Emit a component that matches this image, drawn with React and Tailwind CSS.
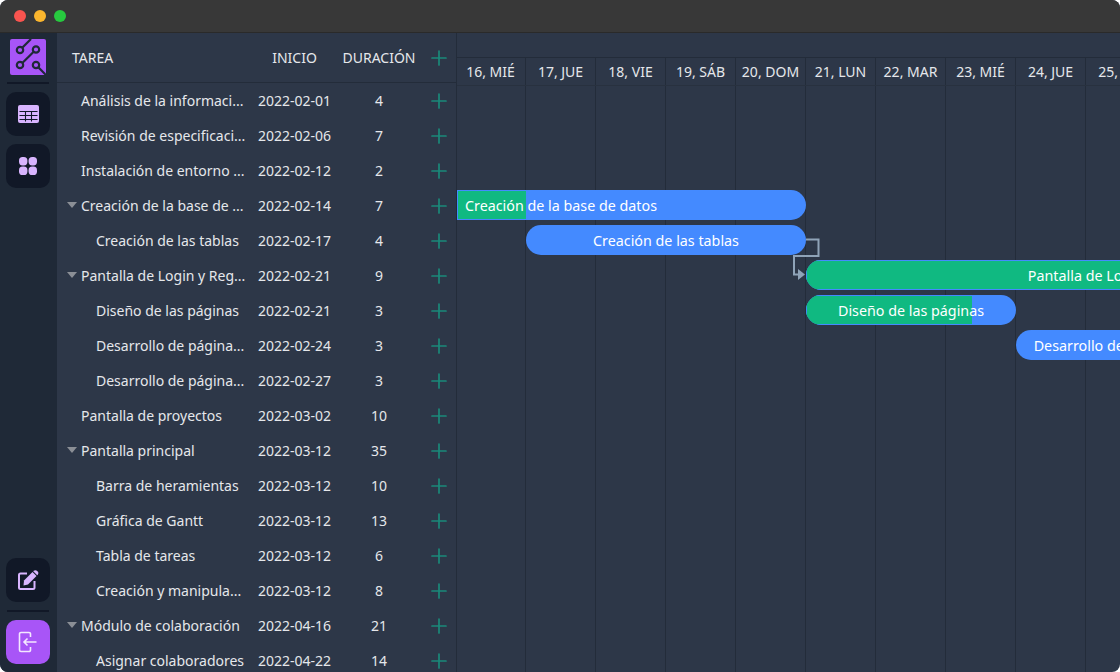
import React from 'react';
import { Plus } from 'lucide-react';

const tasks = [
  { name: 'Análisis de la informaci...', start: '2022-02-01', days: 4, level: 0 },
  { name: 'Revisión de especificaci...', start: '2022-02-06', days: 7, level: 0 },
  { name: 'Instalación de entorno ...', start: '2022-02-12', days: 2, level: 0 },
  { name: 'Creación de la base de ...', start: '2022-02-14', days: 7, level: 0, open: true },
  { name: 'Creación de las tablas', start: '2022-02-17', days: 4, level: 1 },
  { name: 'Pantalla de Login y Reg...', start: '2022-02-21', days: 9, level: 0, open: true },
  { name: 'Diseño de las páginas', start: '2022-02-21', days: 3, level: 1 },
  { name: 'Desarrollo de página...', start: '2022-02-24', days: 3, level: 1 },
  { name: 'Desarrollo de página...', start: '2022-02-27', days: 3, level: 1 },
  { name: 'Pantalla de proyectos', start: '2022-03-02', days: 10, level: 0 },
  { name: 'Pantalla principal', start: '2022-03-12', days: 35, level: 0, open: true },
  { name: 'Barra de heramientas', start: '2022-03-12', days: 10, level: 1 },
  { name: 'Gráfica de Gantt', start: '2022-03-12', days: 13, level: 1 },
  { name: 'Tabla de tareas', start: '2022-03-12', days: 6, level: 1 },
  { name: 'Creación y manipula...', start: '2022-03-12', days: 8, level: 1 },
  { name: 'Módulo de colaboración', start: '2022-04-16', days: 21, level: 0, open: true },
  { name: 'Asignar colaboradores', start: '2022-04-22', days: 14, level: 1 },
];

const dates = ['16, MIÉ', '17, JUE', '18, VIE', '19, SÁB', '20, DOM', '21, LUN', '22, MAR', '23, MIÉ', '24, JUE', '25, VIE'];

const SideButton = ({ children, active }) => (
  <button className={`w-11 h-11 rounded-[10px] flex items-center justify-center ${active ? 'bg-[#a855f7]' : 'bg-[#111827]'}`}>
    {children}
  </button>
);

const AddIcon = () => <Plus size={24} strokeWidth={1.7} className="text-[#1a8a7a]" />;

const TaskRow = ({ task }) => (
  <div className="h-[35px] flex items-center text-sm text-[#e5e7eb]">
    <div className="w-[191px] relative whitespace-nowrap">
      {task.open && (
        <span className="absolute left-[10px] top-[6px] w-0 h-0 border-l-[5.5px] border-r-[5.5px] border-t-[6px] border-l-transparent border-r-transparent border-t-[#8b8f96]" />
      )}
      <span className={task.level ? 'pl-[39px]' : 'pl-[24px]'}>{task.name}</span>
    </div>
    <div className="w-[93px] text-center">{task.start}</div>
    <div className="w-[76px] text-center">{task.days}</div>
    <div className="flex-1 flex justify-end pr-[5px]">
      <AddIcon />
    </div>
  </div>
);

const Bar = ({ x, y, w, label, progress, round = 'rounded-full', labelCenter }) => (
  <div
    className={`absolute h-[30px] bg-[#448aff] overflow-hidden text-[14.3px] text-white ${round}`}
    style={{ left: x, top: y, width: w }}
  >
    {progress > 0 && (
      <div className="absolute left-0 top-0 bottom-0 bg-[#10b981] border-y border-l border-[#448aff] box-border" style={{ width: progress }} />
    )}
    <div
      className="absolute top-0 h-full pt-[1px] flex items-center whitespace-nowrap"
      style={{ left: labelCenter, transform: 'translateX(-50%)' }}
    >
      {label}
    </div>
  </div>
);

export default function App() {
  return (
    <div className="w-[1120px] h-[672px] bg-[#2d3748] overflow-hidden flex flex-col rounded-lg font-['Noto_Sans',sans-serif]">
      {/* title bar */}
      <div className="h-[33px] shrink-0 bg-[#383838] border-b border-[#2a2a2a] flex items-center gap-[8px] pl-[14px]">
        <span className="w-[12px] h-[12px] rounded-full bg-[#f9544f]" />
        <span className="w-[12px] h-[12px] rounded-full bg-[#fbb62e]" />
        <span className="w-[12px] h-[12px] rounded-full bg-[#27c93f]" />
      </div>

      <div className="flex flex-1 min-h-0">
        {/* sidebar */}
        <div className="w-[57px] shrink-0 bg-[#1f2937] flex flex-col items-center pt-[6px] pb-[8px] pr-[1px]">
          <svg width="36" height="36" viewBox="0 0 36 36" className="shrink-0">
            <rect width="36" height="36" rx="2" fill="#a855f7" />
            <g fill="none" stroke="#1f2937" strokeWidth="2.2">
              <path d="M21 0 L12.5 8.5" />
              <circle cx="10" cy="11" r="3.2" />
              <circle cx="26" cy="10.5" r="3.2" />
              <path d="M23.7 12.8 L12.3 24" />
              <circle cx="10" cy="26" r="3.2" />
              <circle cx="26" cy="26" r="3.2" />
              <path d="M28.3 28.3 L36 36" />
            </g>
          </svg>
          <div className="w-[42px] h-[2px] bg-[#111827] mt-[7px] shrink-0" />
          <div className="flex flex-col gap-[8px] mt-[8px]">
            <SideButton>
              <svg width="21" height="18" viewBox="0 0 21 18">
                <rect x="0" y="0" width="21" height="18" rx="2" fill="#d8b4fe" />
                <path d="M1.5 6.5H19.5M1.5 10.5H19.5M1.5 14.5H19.5M7.5 6.5V16.5M13.5 6.5V16.5" stroke="#111827" strokeWidth="1.1" fill="none" />
              </svg>
            </SideButton>
            <SideButton>
              <svg width="18" height="18" viewBox="0 0 18 18" fill="#d8b4fe">
                <rect x="0" y="0" width="8.4" height="8.4" rx="3.6" />
                <rect x="9.6" y="0" width="8.4" height="8.4" rx="3.6" />
                <rect x="0" y="9.6" width="8.4" height="8.4" rx="3.6" />
                <rect x="9.6" y="9.6" width="8.4" height="8.4" rx="3.6" />
              </svg>
            </SideButton>
          </div>
          <div className="mt-auto flex flex-col items-center">
            <SideButton>
              <svg width="22" height="22" viewBox="0 0 22 22" fill="none">
                <path d="M10 4.5H3.5A1.5 1.5 0 0 0 2 6V18.5A1.5 1.5 0 0 0 3.5 20H16A1.5 1.5 0 0 0 17.5 18.5V12" stroke="#d8b4fe" strokeWidth="2" />
                <path d="M7 11.5L15.5 3L19.5 7L11 15.5L6.5 16.5Z" fill="#d8b4fe" />
                <path d="M16.7 1.8C17.6 0.9 19 0.9 19.9 1.8L20.7 2.6C21.6 3.5 21.6 4.9 20.7 5.8L20.2 6.3L16.2 2.3Z" fill="#d8b4fe" />
              </svg>
            </SideButton>
            <div className="w-[42px] h-[2px] bg-[#111827] my-[8px]" />
            <SideButton active>
              <svg width="20" height="22" viewBox="0 0 20 22" fill="none" stroke="#f3e8ff" strokeWidth="1.6">
                <path d="M12.5 6V3A1.5 1.5 0 0 0 11 1.5H3A1.5 1.5 0 0 0 1.5 3V19A1.5 1.5 0 0 0 3 20.5H11A1.5 1.5 0 0 0 12.5 19V16" />
                <path d="M18.5 11H6M9.5 7.5L6 11L9.5 14.5" />
              </svg>
            </SideButton>
          </div>
        </div>

        {/* task table */}
        <div className="w-[399px] shrink-0 flex flex-col overflow-hidden">
          <div className="h-[50px] shrink-0 flex items-center text-sm text-[#e5e7eb] border-b border-[#232c3a]">
            <div className="w-[191px] pl-[15px]">TAREA</div>
            <div className="w-[93px] text-center">INICIO</div>
            <div className="w-[76px] text-center whitespace-nowrap">DURACIÓN</div>
            <div className="flex-1 flex justify-end pr-[5px]">
              <AddIcon />
            </div>
          </div>
          <div>
            {tasks.map((task, i) => (
              <TaskRow key={i} task={task} />
            ))}
          </div>
        </div>

        {/* gantt */}
        <div className="flex-1 min-w-0 border-l border-[#232c3a] flex flex-col relative overflow-hidden">
          <div className="h-[25px] shrink-0 border-b border-[#232c3a]" />
          <div className="flex h-[28px] shrink-0 border-b border-[#28313f]">
            {dates.map((d, i) => (
              <div key={d} className={`${i === 0 ? 'w-[69px] pr-[1px]' : 'w-[70px]'} shrink-0 border-r border-[#232c3a] flex items-center justify-center text-sm text-[#e5e7eb] whitespace-nowrap`}>
                {d}
              </div>
            ))}
          </div>
          <div className="flex-1 flex relative">
            {dates.map((d, i) => (
              <div key={d} className={`${i === 0 ? 'w-[69px]' : 'w-[70px]'} shrink-0 border-r border-[#232c3a]`} />
            ))}
            {/* bars */}
            <Bar x={0} y={104} w={349} label="Creación de la base de datos" progress={69} round="rounded-r-full" labelCenter={104} />
            <Bar x={69} y={139} w={280} label="Creación de las tablas" labelCenter={140} />
            <Bar x={349} y={174} w={680} label="Pantalla de Login y Registro" progress={680} labelCenter={315} />
            <Bar x={349} y={209} w={210} label="Diseño de las páginas" progress={166} labelCenter={105} />
            <Bar x={559} y={244} w={210} label="Desarrollo de páginas web" labelCenter={107} />
            {/* dependency arrow */}
            <svg className="absolute left-[330px] top-[150px]" width="40" height="50" viewBox="0 0 40 50" fill="none">
              <path d="M19 3.5H31.5V20H7V38.5H12" stroke="#8fa3b8" strokeWidth="2" />
              <path d="M11 33L18 38.5L11 44Z" fill="#8fa3b8" />
            </svg>
          </div>
        </div>
      </div>
    </div>
  );
}
